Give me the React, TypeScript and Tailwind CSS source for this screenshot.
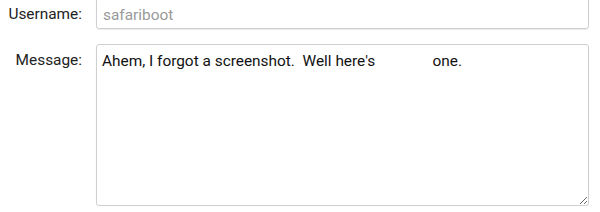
import { useState } from 'react'

const font = { fontFamily: 'Roboto, "Liberation Sans", sans-serif' }

export default function App() {
  const [username, setUsername] = useState('')
  const [message, setMessage] = useState(
    "Ahem, I forgot a screenshot.  Well here's               one.",
  )

  return (
    <div
      className="mt-[-3px] grid grid-cols-[82px_1fr] gap-x-[14px] gap-y-[15px] pr-[11px] text-[15.4px] text-[#111]"
      style={font}
    >
      <label htmlFor="username" className="pt-[9px] text-right leading-[17px] text-[#222]">
        Username:
      </label>
      <input
        id="username"
        type="text"
        value={username}
        onChange={(e) => setUsername(e.target.value)}
        placeholder="safariboot"
        className="h-[32px] w-full rounded-[3px] border border-[#cfcfcf] px-[6px] pt-[8px] pb-[4px] leading-[17px] shadow-[0_1px_1px_rgba(0,0,0,0.08)] outline-none placeholder:text-[#999]"
      />

      <label htmlFor="message" className="pt-[8px] text-right leading-[17px] text-[#222]">
        Message:
      </label>
      <textarea
        id="message"
        value={message}
        onChange={(e) => setMessage(e.target.value)}
        className="h-[162px] w-full resize-y rounded-[3px] border border-[#cfcfcf] px-[5px] py-[8px] leading-[17px] shadow-[0_1px_1px_rgba(0,0,0,0.08)] outline-none"
      />
    </div>
  )
}
